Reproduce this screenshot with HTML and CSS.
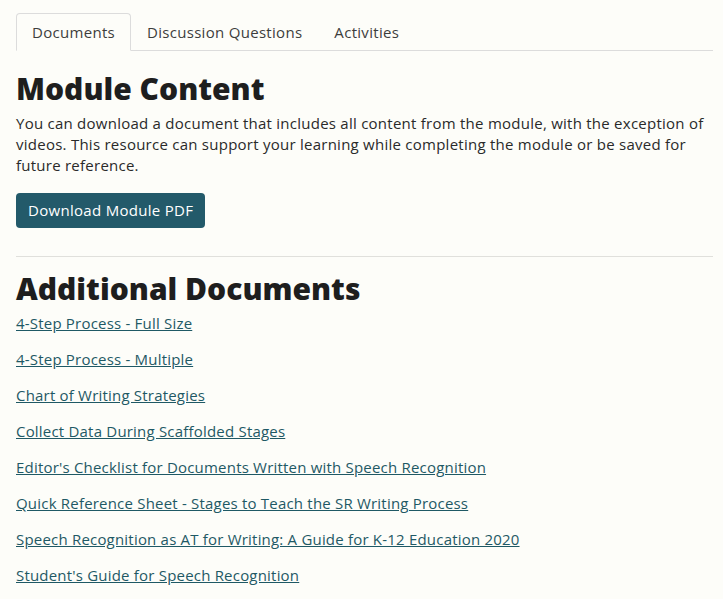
FILE: index.html
```html
<!DOCTYPE html>
<html lang="en">
<head>
    <meta charset="UTF-8"/>
    <meta name="viewport" content="width=device-width, initial-scale=1.0"/>
    <title>Module Documents</title>
    <link rel="stylesheet" href="styles.css">
</head>
<body>

    <ul class="tabs">
        <li><a class="tab active" href="javascript:void(0)">Documents</a></li>
        <li><a class="tab" href="javascript:void(0)">Discussion Questions</a></li>
        <li><a class="tab" href="javascript:void(0)">Activities</a></li>
    </ul>

    <div class="tab-content">
        <h2>Module Content</h2>
        <p class="intro">You can download a document that includes all content from the module, with the exception of videos. This resource can support your learning while completing the module or be saved for future reference.</p>
        <button class="download-button" type="button">Download Module PDF</button>

        <hr/>

        <h2 class="docs-title">Additional Documents</h2>
        <div class="doc-list">
            <a href="javascript:void(0)">4-Step Process - Full Size</a>
            <a href="javascript:void(0)">4-Step Process - Multiple</a>
            <a href="javascript:void(0)">Chart of Writing Strategies</a>
            <a href="javascript:void(0)">Collect Data During Scaffolded Stages</a>
            <a href="javascript:void(0)">Editor's Checklist for Documents Written with Speech Recognition</a>
            <a href="javascript:void(0)">Quick Reference Sheet - Stages to Teach the SR Writing Process</a>
            <a href="javascript:void(0)">Speech Recognition as AT for Writing: A Guide for K-12 Education 2020</a>
            <a href="javascript:void(0)">Student's Guide for Speech Recognition</a>
        </div>
    </div>

</body>
</html>
```

FILE: styles.css
```css
body {
    margin: 0;
    padding: 13px 10px 0 16px;
    font-family: 'Open Sans', 'DejaVu Sans', sans-serif;
    background-color: #fdfdf9;
    color: #222;
}

.tabs {
    display: flex;
    list-style: none;
    margin: 0;
    padding: 0;
    border-bottom: 1px solid #dcdcdc;
}

.tab {
    display: block;
    padding: 8px 15px;
    font-size: 15px;
    line-height: 20px;
    letter-spacing: 0.3px;
    color: #3d3d3d;
    text-decoration: none;
    border: 1px solid transparent;
    border-radius: 4px 4px 0 0;
    margin-bottom: -1px;
}

.tab.active {
    border-color: #dcdcdc #dcdcdc #fdfdf9;
    background-color: #fdfdf9;
}

h2 {
    font-size: 30px;
    font-weight: 800;
    line-height: 36px;
    margin: 20px 0 6px;
    color: #1e1e1e;
}

.docs-title {
    margin-top: 14px;
}

.intro {
    font-size: 15px;
    line-height: 21px;
    letter-spacing: 0.25px;
    margin: 0 0 17px;
    color: #2a2a2a;
}

.download-button {
    font-family: 'Open Sans', 'DejaVu Sans', sans-serif;
    font-size: 15px;
    line-height: 21px;
    letter-spacing: 0.3px;
    padding: 7px 12px;
    color: #fff;
    background-color: #235a6a;
    border: none;
    border-radius: 4px;
}

hr {
    border: none;
    border-top: 1px solid #e0e0dc;
    margin: 28px 0 0;
}

.doc-list {
    display: flex;
    flex-direction: column;
    align-items: flex-start;
    gap: 15px;
    margin-top: 5px;
}

.doc-list a {
    font-size: 15px;
    line-height: 21px;
    letter-spacing: 0.2px;
    color: #1f5965;
}
```
